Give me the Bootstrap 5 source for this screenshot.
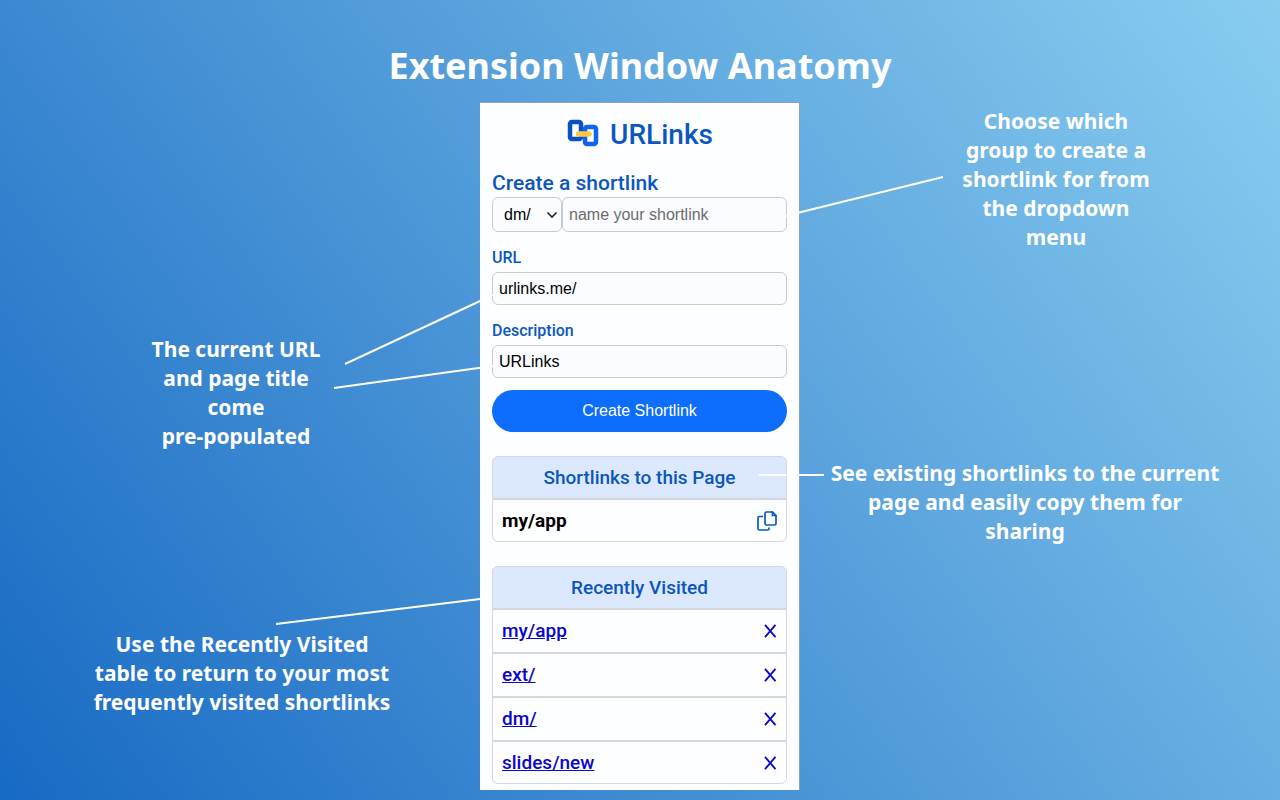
<!DOCTYPE html>
<html lang="en">
<head>
<meta charset="utf-8">
<meta name="viewport" content="width=device-width, initial-scale=1">
<title>URLinks – Extension Window Anatomy</title>
<link href="https://cdn.jsdelivr.net/npm/bootstrap@5.3.0/dist/css/bootstrap.min.css" rel="stylesheet">
<style>
  body {
    font-family: "Noto Sans", "Open Sans", sans-serif;
    background: linear-gradient(54deg, #176ac4 0%, #579fdb 54%, #88cdf0 100%) fixed;
    color: #fff;
  }
  .page-title { font-size: 36px; font-weight: 700; line-height: 48px; padding-top: 42px; margin-bottom: 12px; }
  .callout { font-size: 21px; font-weight: 700; line-height: 29px; }
  .notes-start .callout:first-child { margin-top: 233px; }
  .notes-start .callout + .callout { margin-top: 179px; }
  .notes-end .callout:first-child { margin-top: 5px; margin-left: 32px; }
  .notes-end .callout + .callout { margin-top: 207px; margin-right: 30px; }

  /* extension window */
  .ext-window {
    width: 320px; color: #000; background: #fdfeff;
    border-top: 1px solid #8aa3bd; border-right: 1px solid #8aa3bd;
    padding: 14px 12px 6px; font-family: Roboto, sans-serif;
  }
  .brand-name, .ext-window h3, .ext-window label, .link-table th { color: #0b57bd; font-weight: 500; }
  .brand-name { font-size: 28px; line-height: 36px; }
  .ext-window h3 { font-size: 21px; line-height: 28px; }
  .ext-window label { font-size: 16px; line-height: 20px; }
  .field {
    border: 1px solid #c9cbd0; border-radius: 6px; background-color: #fafcff; color: #000;
    font: 16px/20px "Liberation Sans", sans-serif; height: 33px; padding: 0 6px;
  }
  .field::placeholder { color: #6c6c6c; }
  .name-row .field { height: 35px; }
  select.field {
    width: 70px; padding-left: 11px; appearance: none;
    background: #fafcff url("data:image/svg+xml,%3Csvg xmlns='http://www.w3.org/2000/svg' viewBox='0 0 12 8'%3E%3Cpath d='M1.500 1.500 6 6 10.500 1.500' fill='none' stroke='%23222' stroke-width='1.600'/%3E%3C/svg%3E") no-repeat right 3px center / 12px 8px;
  }
  .create-btn {
    background: #0d6dfd; color: #fff; height: 42px; margin-top: 12px;
    font: 16px/20px "Liberation Sans", sans-serif;
  }
  .link-table { border-collapse: separate; border-spacing: 0; font-size: 19px; line-height: 24px; }
  .link-table th, .link-table td { height: 44px; padding: 0 9px; border: 1px solid #d5d7dc; }
  .link-table th { height: 43px; text-align: center; background: #dce8fd; border-radius: 6px 6px 0 0; }
  .link-table tbody tr:last-child td { height: 43px; border-radius: 0 0 6px 6px; }
  .link-table a { color: #0b06cc; font-weight: 500; }
  .link-table button { color: #0b06cc; line-height: 0; }
  .link-table button.copy-btn { color: #0b57bd; }
  .saved-name { font-weight: 700; }

  /* pointer lines, measured from the window's top-left corner */
  .pointers { top: 0; left: 0; width: 320px; height: 688px; overflow: visible; pointer-events: none; }
</style>
</head>
<body>
<main class="min-vh-100 overflow-hidden pb-2">
  <h1 class="page-title text-center">Extension Window Anatomy</h1>
  <div class="d-flex justify-content-center">
    <div class="notes-start col text-center">
      <p class="callout mb-0 pe-2">The current URL<br>and page title<br>come<br>pre-populated</p>
      <p class="callout mb-0 ps-1">Use the Recently Visited<br>table to return to your most<br>frequently visited shortlinks</p>
    </div>

    <section class="ext-window position-relative flex-shrink-0">
      <h2 class="d-flex justify-content-center align-items-center gap-2 mb-0">
        <svg width="36" height="36" viewBox="0 0 36 36" fill="none" aria-hidden="true">
          <rect x="4" y="5" width="11" height="17" rx="2" stroke="#0b50c8" stroke-width="4.500"/>
          <rect x="19" y="10" width="11" height="17" rx="2" stroke="#0d64f0" stroke-width="4.500"/>
          <path d="M12.500 17H23" stroke="#fdc93e" stroke-width="5.500" stroke-linecap="round"/>
        </svg>
        <span class="brand-name">URLinks</span>
      </h2>

      <form class="mt-3">
        <h3 class="mb-0">Create a shortlink</h3>
        <div class="name-row d-flex">
          <select class="field flex-shrink-0" aria-label="Group"><option>dm/</option></select>
          <input class="field w-100" type="text" placeholder="name your shortlink" aria-label="Shortlink name">
        </div>
        <label class="d-block mt-3 mb-1" for="url">URL</label>
        <input class="field w-100 d-block" id="url" type="text" value="urlinks.me/">
        <label class="d-block mt-3 mb-1" for="desc">Description</label>
        <input class="field w-100 d-block" id="desc" type="text" value="URLinks">
        <button class="create-btn btn rounded-pill border-0 w-100 d-block" type="button">Create Shortlink</button>
      </form>

      <table class="link-table w-100 mt-4">
        <thead><tr><th scope="col">Shortlinks to this Page</th></tr></thead>
        <tbody>
          <tr><td><div class="d-flex justify-content-between align-items-center">
            <span class="saved-name">my/app</span>
            <button class="copy-btn btn border-0 p-0" type="button" aria-label="Copy my/app">
              <svg width="20" height="20" viewBox="0 0 20 20" fill="none" stroke="currentColor" stroke-width="1.700" stroke-linejoin="round" stroke-linecap="round">
                <path d="M9.500 1H15.500L19 4.500V12.500Q19 14 17.500 14H9.500Q8 14 8 12.500V2.500Q8 1 9.500 1Z"/>
                <path d="M15.500 1V4.500H19"/>
                <path d="M5.500 5.500H2.500Q1 5.500 1 7V17.500Q1 19 2.500 19H10.500Q12 19 12 17.500V17"/>
              </svg>
            </button>
          </div></td></tr>
        </tbody>
      </table>

      <table class="link-table w-100 mt-4">
        <thead><tr><th scope="col">Recently Visited</th></tr></thead>
        <tbody>
          <tr><td><div class="d-flex justify-content-between align-items-center"><a href="#">my/app</a>
            <button class="btn border-0 p-0" type="button" aria-label="Remove my/app"><svg width="14" height="14" viewBox="0 0 14 14" stroke="currentColor" stroke-width="1.800"><path d="M2 .8 12.500 13.200M12.500 .8 2 13.200"/></svg></button></div></td></tr>
          <tr><td><div class="d-flex justify-content-between align-items-center"><a href="#">ext/</a>
            <button class="btn border-0 p-0" type="button" aria-label="Remove ext/"><svg width="14" height="14" viewBox="0 0 14 14" stroke="currentColor" stroke-width="1.800"><path d="M2 .8 12.500 13.200M12.500 .8 2 13.200"/></svg></button></div></td></tr>
          <tr><td><div class="d-flex justify-content-between align-items-center"><a href="#">dm/</a>
            <button class="btn border-0 p-0" type="button" aria-label="Remove dm/"><svg width="14" height="14" viewBox="0 0 14 14" stroke="currentColor" stroke-width="1.800"><path d="M2 .8 12.500 13.200M12.500 .8 2 13.200"/></svg></button></div></td></tr>
          <tr><td><div class="d-flex justify-content-between align-items-center"><a href="#">slides/new</a>
            <button class="btn border-0 p-0" type="button" aria-label="Remove slides/new"><svg width="14" height="14" viewBox="0 0 14 14" stroke="currentColor" stroke-width="1.800"><path d="M2 .8 12.500 13.200M12.500 .8 2 13.200"/></svg></button></div></td></tr>
        </tbody>
      </table>

      <svg class="pointers position-absolute" stroke="#fff" stroke-width="2" aria-hidden="true">
        <path d="M463 74 305 113M-135 261 13 192M-146 285 13 263M-204 521 0 496M279 372H344"/>
      </svg>
    </section>

    <div class="notes-end col text-center">
      <p class="callout mb-0">Choose which<br>group to create a<br>shortlink for from<br>the dropdown<br>menu</p>
      <p class="callout mb-0">See existing shortlinks to the current<br>page and easily copy them for<br>sharing</p>
    </div>
  </div>
</main>
<script src="https://cdn.jsdelivr.net/npm/bootstrap@5.3.0/dist/js/bootstrap.bundle.min.js"></script>
</body>
</html>
